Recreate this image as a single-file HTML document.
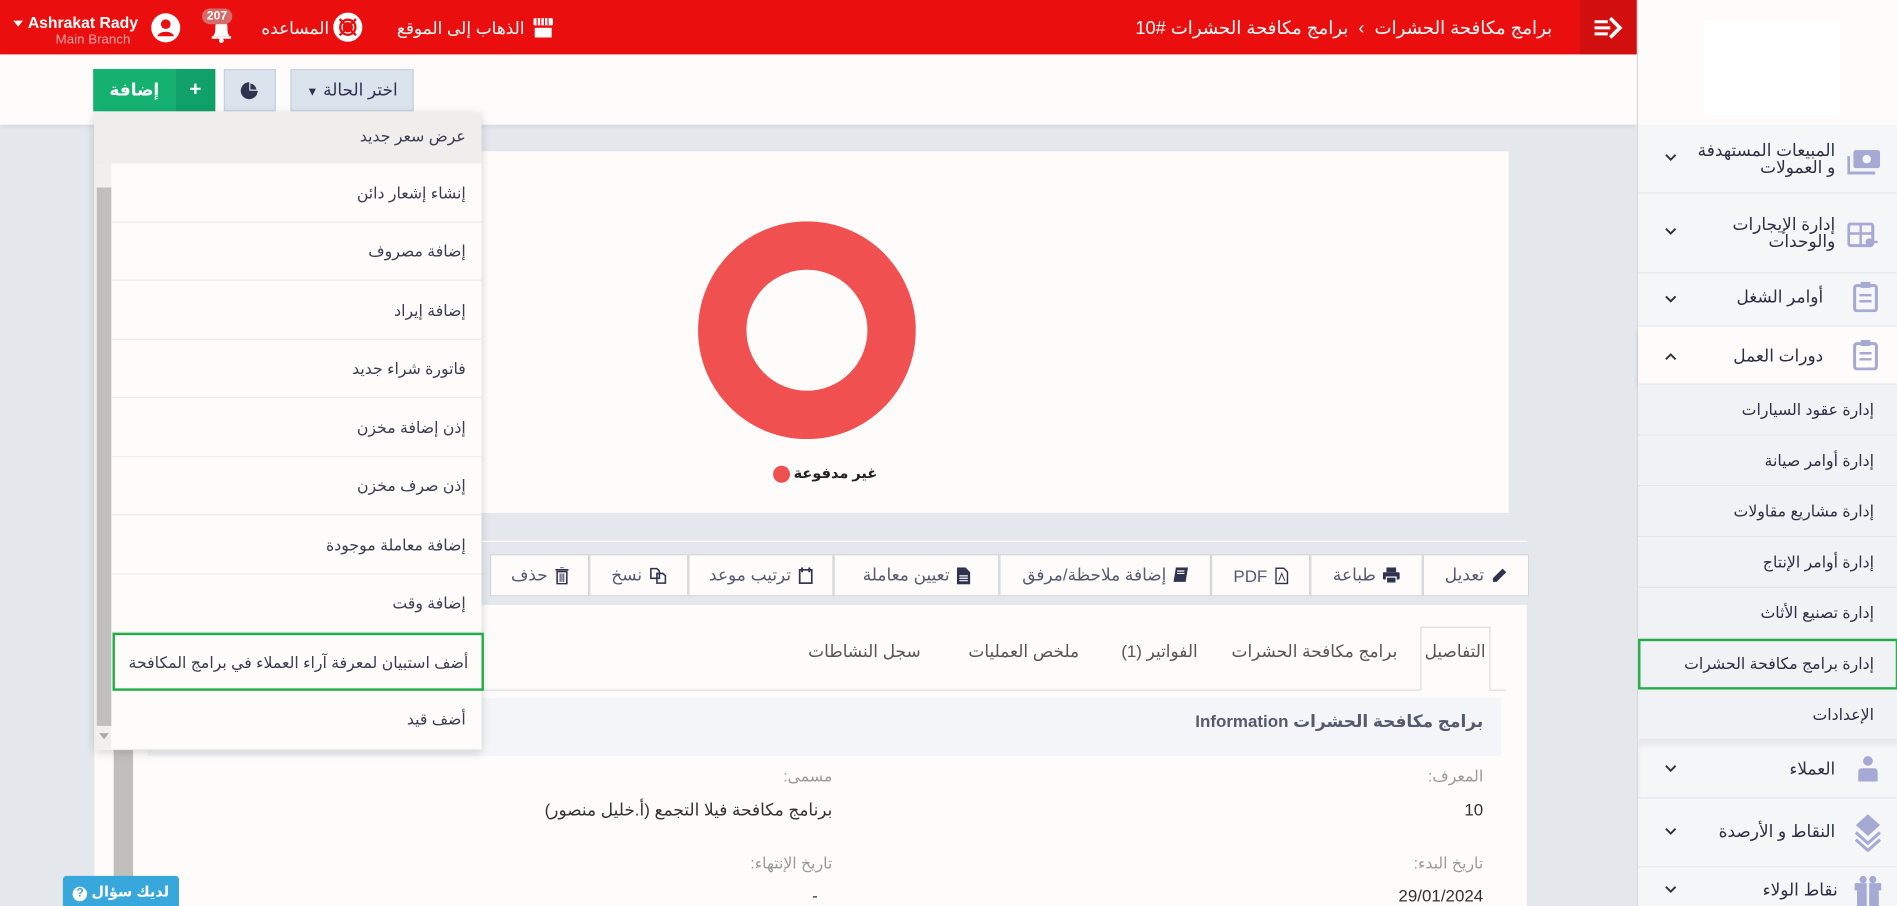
<!DOCTYPE html>
<html><head><meta charset="utf-8">
<style>
*{box-sizing:border-box;margin:0;padding:0}
html,body{width:1897px;height:906px;overflow:hidden;background:#e4e8ed}
body{font-family:"Liberation Sans","DejaVu Sans",sans-serif}
#w{position:absolute;left:0;top:0;width:1568px;height:749px;transform:scale(1.2098);transform-origin:0 0;background:#e4e8ed;overflow:hidden}
.a{position:absolute}
.ar{direction:rtl;white-space:nowrap}
.hdr{left:0;top:0;width:1353px;height:45px;background:#eb0e0e}
.wt{color:#fff;font-size:14px}
.tb{left:0;top:45px;width:1353px;height:58px;background:#fdfcfb;box-shadow:0 2px 4px rgba(0,0,0,.06)}
.side{left:1353px;top:0;width:215px;height:749px;background:#fdfcfb;border-left:1px solid #d8d8d8}
.si{position:absolute;left:0;width:215px;background:#f5f6f8;border-bottom:1px solid #e6e7ea}
.si .t{position:absolute;right:52px;font-size:14px;color:#2c2f45;direction:rtl;text-align:right;line-height:14px}
.si svg.c{position:absolute;left:22px}
.sub{position:absolute;left:0;width:215px;height:42px;background:#f1f2f6;border-bottom:1px solid #e4e5e9}
.sub span{position:absolute;right:20px;top:13px;font-size:13px;color:#2c2f45;direction:rtl;white-space:nowrap}
.dd{left:78px;top:93px;width:320px;height:527px;background:#fdfcfb;box-shadow:0 2px 8px rgba(0,0,0,.18)}
.di{position:absolute;left:14px;width:306px;border-bottom:1px solid #ececec}
.di span{position:absolute;right:13px;font-size:13px;color:#3a3d52;direction:rtl;white-space:nowrap}
.btn{position:absolute;top:458px;height:35px;border:1px solid #d4d6d9;background:#fdfcfb;color:#555a70;font-size:14px;direction:rtl;white-space:nowrap;display:flex;align-items:center;justify-content:center;gap:6px}
.lbl{font-size:13px;color:#9a9a9a;direction:rtl;white-space:nowrap}
.val{font-size:14px;color:#333;direction:rtl;white-space:nowrap}
.tab{font-size:14px;color:#555;direction:rtl;white-space:nowrap;top:530px}
</style></head><body><div id="w">

<div class="a hdr"></div>
<div class="a" style="left:1306px;top:0;width:47px;height:45px;background:#d20f0f"></div>
<svg class="a" style="left:1318px;top:14px" width="24" height="18" viewBox="0 0 24 18"><path d="M0 4h11M0 9h13M0 14h11" stroke="#fff" stroke-width="2.5"/><path d="M13 1l8 8-8 8" stroke="#fff" stroke-width="3" fill="none"/></svg>
<div class="a ar wt" style="right:285px;top:14px;font-size:15px">برامج مكافحة الحشرات &nbsp;›&nbsp; برامج مكافحة الحشرات #10</div>
<div class="a" style="left:11px;top:17px;width:0;height:0;border-left:4px solid transparent;border-right:4px solid transparent;border-top:5px solid #fff"></div>
<div class="a" style="left:23px;top:11px;color:#fff;font-size:13px;font-weight:bold">Ashrakat Rady</div>
<div class="a" style="left:46px;top:27px;color:#f7a5a5;font-size:11px">Main Branch</div>
<svg class="a" style="left:124px;top:10px" width="26" height="26" viewBox="0 0 26 26"><circle cx="13" cy="13" r="12" fill="#fff"/><circle cx="13" cy="10" r="4" fill="#eb0e0e"/><path d="M6 20c2-5 12-5 14 0" fill="#eb0e0e"/></svg>
<svg class="a" style="left:172px;top:12px" width="22" height="24" viewBox="0 0 22 24"><path d="M4 18c2-2 2-5 2-8 0-3 2-5 5-5s5 2 5 5c0 3 0 6 2 8z" fill="#fff"/><rect x="3" y="18" width="16" height="2" fill="#fff"/><circle cx="11" cy="21.5" r="2" fill="#fff"/></svg>
<div class="a" style="left:167px;top:7px;background:#d56b6b;color:#fff;font-size:10px;font-weight:bold;border-radius:8px;padding:1px 4px">207</div>
<div class="a ar wt" style="left:216px;top:15px">المساعده</div>
<svg class="a" style="left:275px;top:10px" width="25" height="25" viewBox="0 0 26 26"><circle cx="13" cy="13" r="10" fill="none" stroke="#fff" stroke-width="5"/><circle cx="13" cy="13" r="5" fill="none" stroke="#fff" stroke-width="1"/><path d="M6 6l4 4M20 6l-4 4M6 20l4-4M20 20l-4-4" stroke="#eb0e0e" stroke-width="2"/></svg>
<div class="a ar wt" style="left:328px;top:15px">الذهاب إلى الموقع</div>
<svg class="a" style="left:440px;top:14px" width="18" height="18" viewBox="0 0 18 18"><rect x="1" y="1" width="16" height="6" rx="1" fill="#fff"/><path d="M4 1v6M7 1v6M10 1v6M13 1v6" stroke="#eb0e0e"/><rect x="2" y="9" width="14" height="8" fill="#fff"/></svg>

<div class="a tb"></div>
<div class="a" style="left:77px;top:57px;width:68px;height:35px;background:#15b170;color:#fff;font-size:14px;font-weight:bold;text-align:center;line-height:35px">إضافة</div>
<div class="a" style="left:145px;top:57px;width:33px;height:35px;background:#10a069;color:#fff;font-size:17px;font-weight:bold;text-align:center;line-height:34px">+</div>
<div class="a" style="left:185px;top:57px;width:43px;height:35px;background:#dbe3ec;border:1px solid #c4d2e2"></div>
<svg class="a" style="left:198px;top:67px" width="16" height="16" viewBox="0 0 16 16"><circle cx="8" cy="8" r="7" fill="#2e3350"/><path d="M8 8V0.5A7.5 7.5 0 0 1 15.5 8z" fill="#dbe3ec"/><path d="M9 7V2a6 6 0 0 1 5 5z" fill="#2e3350"/></svg>
<div class="a" style="left:240px;top:57px;width:102px;height:35px;background:#dbe3ec;border:1px solid #c4d2e2;font-size:14px;color:#2e3350;text-align:center;line-height:33px;direction:rtl">اختر الحالة <span style="font-size:10px">▼</span></div>

<div class="a" style="left:78px;top:103px;width:16px;height:646px;background:#fdfcfb"></div>
<div class="a" style="left:94px;top:560px;width:16px;height:189px;background:#c0bfbd"></div>

<div class="a" style="left:108px;top:124px;width:1140px;height:301px;background:#fdfcfb;border:1px solid #e3e6ea"></div>
<svg class="a" style="left:577px;top:183px" width="180" height="180" viewBox="0 0 180 180"><circle cx="90" cy="90" r="70" fill="none" stroke="#f05050" stroke-width="40"/></svg>
<div class="a" style="left:639px;top:385px;width:14px;height:14px;border-radius:7px;background:#f05050"></div>
<div class="a ar" style="left:656px;top:384px;font-size:12px;font-weight:bold;color:#222">غير مدفوعة</div>

<div class="a" style="left:394px;top:447px;width:868px;height:53px;background:#e4e8ed;border-top:1px solid #fff"></div>
<div class="btn" style="left:405px;width:82px"><svg width="11" height="14" viewBox="0 0 11 14"><path d="M0 2h11M4 0h3M1.5 3.5h8v10h-8z" stroke="#2e3350" stroke-width="1.3" fill="none"/><path d="M4 5v7M5.5 5v7M7 5v7" stroke="#2e3350" stroke-width="0.8"/></svg> حذف</div>
<div class="btn" style="left:487px;width:82px"><svg width="14" height="14" viewBox="0 0 14 14"><path d="M1 1h5l2 2v6H1zM6 5h5l2 2v6H6z" stroke="#2e3350" stroke-width="1.3" fill="#fdfcfb"/></svg> نسخ</div>
<div class="btn" style="left:569px;width:120px"><svg width="12" height="14" viewBox="0 0 12 14"><rect x="1" y="2" width="10" height="11" stroke="#2e3350" stroke-width="1.4" fill="none"/><path d="M3 0v4M9 0v4" stroke="#2e3350" stroke-width="1.6"/></svg> ترتيب موعد</div>
<div class="btn" style="left:689px;width:137px"><svg width="11" height="14" viewBox="0 0 11 14"><path d="M0 0h7l4 4v10H0z" fill="#2e3350"/><path d="M2 7h7M2 9h7M2 11h7" stroke="#fff"/></svg> تعيين معاملة</div>
<div class="btn" style="left:826px;width:175px"><svg width="12" height="14" viewBox="0 0 12 14"><path d="M2 0h10l-2 12H0z" fill="#2e3350"/><path d="M3 3h6M3 5h6" stroke="#fff"/></svg> إضافة ملاحظة/مرفق</div>
<div class="btn" style="left:1001px;width:82px;direction:ltr">PDF <svg width="11" height="14" viewBox="0 0 11 14"><path d="M0.7 0.7h6.5l3 3v9.6H0.7z" stroke="#2e3350" stroke-width="1.2" fill="none"/><path d="M3 11l2.5-6 2.5 6" stroke="#2e3350" stroke-width="0.8" fill="none"/></svg></div>
<div class="btn" style="left:1083px;width:93px"><svg width="14" height="13" viewBox="0 0 14 13"><rect x="3" y="0" width="8" height="4" fill="#2e3350"/><rect x="0" y="4" width="14" height="6" rx="1" fill="#2e3350"/><rect x="3" y="8" width="8" height="5" fill="#2e3350" stroke="#fff"/></svg> طباعة</div>
<div class="btn" style="left:1176px;width:88px"><svg width="13" height="13" viewBox="0 0 13 13"><path d="M9 1l3 3-8 8H1V9z" fill="#2e3350"/></svg> تعديل</div>

<div class="a" style="left:110px;top:500px;width:1152px;height:249px;background:#fdfcfb"></div>
<div class="a" style="left:122px;top:570px;width:1123px;height:1px;background:#ddd"></div>
<div class="a" style="left:1174px;top:518px;width:58px;height:53px;border:1px solid #ddd;border-bottom:1px solid #fdfcfb;background:#fdfcfb"></div>
<div class="a tab" style="right:340px">التفاصيل</div>
<div class="a tab" style="right:413px">برامج مكافحة الحشرات</div>
<div class="a tab" style="right:578px">الفواتير (1)</div>
<div class="a tab" style="right:676px">ملخص العمليات</div>
<div class="a tab" style="right:807px">سجل النشاطات</div>
<div class="a" style="left:122px;top:577px;width:1119px;height:48px;background:#f3f5f8"></div>
<div class="a ar" style="right:342px;top:588px;font-size:14px;font-weight:bold;color:#555a6e">برامج مكافحة الحشرات Information</div>
<div class="a lbl" style="right:342px;top:634px">المعرف:</div>
<div class="a val" style="right:342px;top:661px">10</div>
<div class="a lbl" style="right:880px;top:634px">مسمى:</div>
<div class="a val" style="right:880px;top:661px">برنامج مكافحة فيلا التجمع (أ.خليل منصور)</div>
<div class="a lbl" style="right:342px;top:706px">تاريخ البدء:</div>
<div class="a val" style="right:342px;top:732px">29/01/2024</div>
<div class="a lbl" style="right:880px;top:706px">تاريخ الإنتهاء:</div>
<div class="a val" style="right:892px;top:732px">-</div>

<div class="a dd">
 <div class="a" style="left:0;top:0;width:14px;height:527px;background:#f1f0ef"></div>
 <div class="a" style="left:2px;top:62px;width:12px;height:445px;background:#c0bfbd"></div>
 <div class="a" style="left:4px;top:7px;border-left:4px solid transparent;border-right:4px solid transparent;border-bottom:5px solid #555"></div>
 <div class="a" style="left:4px;top:513px;border-left:4px solid transparent;border-right:4px solid transparent;border-top:5px solid #aaa"></div>
 <div class="di" style="top:0;height:42px;background:#efeeed;left:0;width:320px"><span style="top:12px">عرض سعر جديد</span></div>
 <div class="di" style="top:42px;height:49px"><span style="top:17px">إنشاء إشعار دائن</span></div>
 <div class="di" style="top:91px;height:48px"><span style="top:16px">إضافة مصروف</span></div>
 <div class="di" style="top:139px;height:49px"><span style="top:17px">إضافة إيراد</span></div>
 <div class="di" style="top:188px;height:48px"><span style="top:16px">فاتورة شراء جديد</span></div>
 <div class="di" style="top:236px;height:49px"><span style="top:17px">إذن إضافة مخزن</span></div>
 <div class="di" style="top:285px;height:48px"><span style="top:16px">إذن صرف مخزن</span></div>
 <div class="di" style="top:333px;height:49px"><span style="top:17px">إضافة معاملة موجودة</span></div>
 <div class="di" style="top:382px;height:48px"><span style="top:16px">إضافة وقت</span></div>
 <div class="di" style="top:430px;height:48px;border:2px solid #22ad48;left:15px;width:307px"><span style="top:15px;right:11px">أضف استبيان لمعرفة آراء العملاء في برامج المكافحة</span></div>
 <div class="di" style="top:478px;height:49px"><span style="top:16px">أضف قيد</span></div>
</div>

<div class="a" style="left:52px;top:724px;width:96px;height:26px;background:#38a7dc;border-radius:3px 3px 0 0;color:#fff;font-size:12px;font-weight:bold;direction:rtl;text-align:center;line-height:26px">لديك سؤال <span style="display:inline-block;width:12px;height:12px;border-radius:6px;background:#fff;color:#38a7dc;font-size:10px;line-height:12px">?</span></div>

<div class="a side">
 <div class="a" style="left:55px;top:17px;width:112px;height:78px;background:#fff"></div>
 <div class="si" style="top:103px;height:57px"><span class="t" style="top:14px">المبيعات المستهدفة<br>و العمولات</span><svg class="c" style="top:24px" width="10" height="7" viewBox="0 0 10 7"><path d="M1 1l4 4 4-4" stroke="#333" stroke-width="1.6" fill="none"/></svg>
  <svg class="a" style="right:14px;top:20px" width="28" height="22" viewBox="0 0 28 22"><rect x="5" y="1" width="22" height="15" rx="2" fill="#a6a9d4"/><circle cx="16" cy="8.5" r="3.5" fill="#f5f6f8"/><path d="M1 6v14h22" stroke="#a6a9d4" stroke-width="2.5" fill="none"/></svg></div>
 <div class="si" style="top:160px;height:66px"><span class="t" style="top:18px">إدارة الإيجارات<br>والوحدات</span><svg class="c" style="top:28px" width="10" height="7" viewBox="0 0 10 7"><path d="M1 1l4 4 4-4" stroke="#333" stroke-width="1.6" fill="none"/></svg>
  <svg class="a" style="right:16px;top:24px" width="26" height="22" viewBox="0 0 26 22"><rect x="1" y="1" width="20" height="18" rx="2" fill="none" stroke="#a6a9d4" stroke-width="2.5"/><path d="M1 9h20M11 1v18" stroke="#a6a9d4" stroke-width="2"/><circle cx="18" cy="16" r="3" fill="#a6a9d4"/><path d="M20 16h5" stroke="#a6a9d4" stroke-width="2"/></svg></div>
 <div class="si" style="top:226px;height:44px"><span class="t" style="top:12px;right:62px">أوامر الشغل</span><svg class="c" style="top:18px" width="10" height="7" viewBox="0 0 10 7"><path d="M1 1l4 4 4-4" stroke="#333" stroke-width="1.6" fill="none"/></svg>
  <svg class="a" style="right:16px;top:6px" width="22" height="26" viewBox="0 0 22 26"><rect x="2" y="4" width="18" height="21" rx="2" fill="none" stroke="#a6a9d4" stroke-width="2.5"/><rect x="7" y="1" width="8" height="5" fill="#a6a9d4"/><path d="M6 12h10M6 17h10" stroke="#a6a9d4" stroke-width="2"/></svg></div>
 <div class="si" style="top:270px;height:48px;background:#fdfcfb;box-shadow:0 3px 4px rgba(0,0,0,.1)"><span class="t" style="top:17px;right:62px">دورات العمل</span><svg class="c" style="top:21px" width="10" height="7" viewBox="0 0 10 7"><path d="M1 6l4-4 4 4" stroke="#333" stroke-width="1.6" fill="none"/></svg>
  <svg class="a" style="right:16px;top:10px" width="22" height="26" viewBox="0 0 22 26"><rect x="2" y="4" width="18" height="21" rx="2" fill="none" stroke="#a6a9d4" stroke-width="2.5"/><rect x="7" y="1" width="8" height="5" fill="#a6a9d4"/><path d="M6 12h10M6 17h10" stroke="#a6a9d4" stroke-width="2"/></svg></div>
 <div class="sub" style="top:318px"><span>إدارة عقود السيارات</span></div>
 <div class="sub" style="top:360px"><span>إدارة أوامر صيانة</span></div>
 <div class="sub" style="top:402px"><span>إدارة مشاريع مقاولات</span></div>
 <div class="sub" style="top:444px"><span>إدارة أوامر الإنتاج</span></div>
 <div class="sub" style="top:486px"><span>إدارة تصنيع الأثاث</span></div>
 <div class="sub" style="top:528px;border:2px solid #22ad48"><span style="right:18px;top:11px">إدارة برامج مكافحة الحشرات</span></div>
 <div class="sub" style="top:570px"><span>الإعدادات</span></div>
 <div class="si" style="top:612px;height:48px;box-shadow:inset 0 4px 4px rgba(0,0,0,.05)"><span class="t" style="top:16px;right:52px">العملاء</span><svg class="c" style="top:20px" width="10" height="7" viewBox="0 0 10 7"><path d="M1 1l4 4 4-4" stroke="#333" stroke-width="1.6" fill="none"/></svg>
  <svg class="a" style="right:16px;top:12px" width="18" height="24" viewBox="0 0 18 24"><circle cx="9" cy="5" r="4" fill="#a6a9d4"/><path d="M1 22v-8q0-3 3-3h10q3 0 3 3v8z" fill="#a6a9d4"/></svg></div>
 <div class="si" style="top:660px;height:57px"><span class="t" style="top:20px;right:52px">النقاط و الأرصدة</span><svg class="c" style="top:24px" width="10" height="7" viewBox="0 0 10 7"><path d="M1 1l4 4 4-4" stroke="#333" stroke-width="1.6" fill="none"/></svg>
  <svg class="a" style="right:14px;top:12px" width="22" height="32" viewBox="0 0 22 32"><path d="M11 1l10 9-10 9-10-9z" fill="#a6a9d4"/><path d="M1 16l10 9 10-9M1 22l10 9 10-9" stroke="#a6a9d4" stroke-width="2.5" fill="none"/></svg></div>
 <div class="si" style="top:717px;height:40px"><span class="t" style="top:11px;right:50px">نقاط الولاء</span><svg class="c" style="top:15px" width="10" height="7" viewBox="0 0 10 7"><path d="M1 1l4 4 4-4" stroke="#333" stroke-width="1.6" fill="none"/></svg>
  <svg class="a" style="right:13px;top:6px" width="24" height="26" viewBox="0 0 24 26"><rect x="1" y="7" width="22" height="6" fill="#a6a9d4"/><rect x="3" y="13" width="18" height="13" fill="#a6a9d4"/><path d="M12 7v19" stroke="#f5f6f8" stroke-width="2"/><circle cx="8" cy="4" r="3" fill="#a6a9d4"/><circle cx="16" cy="4" r="3" fill="#a6a9d4"/></svg></div>
</div>

</div></body></html>
